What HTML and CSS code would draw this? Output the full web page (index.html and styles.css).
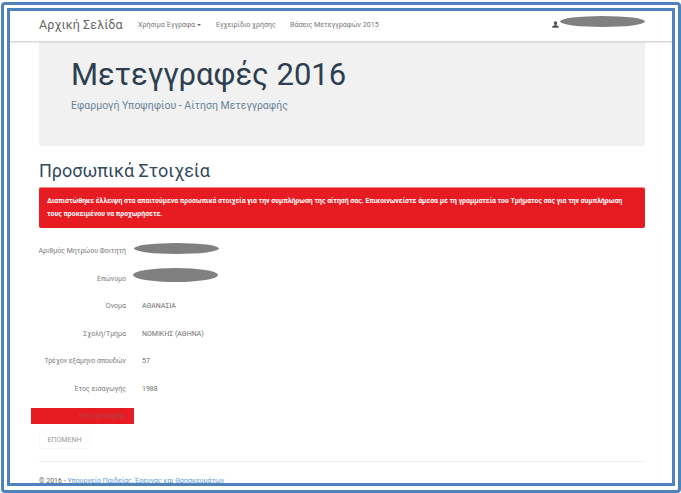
FILE: index.html
```html
<!DOCTYPE html>
<html lang="el">
<head>
<meta charset="utf-8">
<title>Μετεγγραφές 2016</title>
<link rel="stylesheet" href="styles.css">
</head>
<body>
<div class="outer">
  <div class="inner">
    <nav class="navbar">
      <a class="brand">Αρχική Σελίδα</a>
      <a class="nav-link first">Χρήσιμα Έγγραφα<span class="caret"></span></a>
      <a class="nav-link second">Εγχειρίδιο χρήσης</a>
      <a class="nav-link third">Βάσεις Μετεγγραφών 2015</a>
      <span class="user">
        <svg class="user-icon" viewBox="0 0 12 12"><path d="M6 0.5c-1.8 0-2.8 1.3-2.8 3 0 1.2.5 2.2 1.2 2.8v1L0.5 8.8v2.7h11V8.8L7.600 7.300v-1c.7-.6 1.200-1.600 1.200-2.800 0-1.700-1-3-2.800-3z"/></svg>
        <span class="redact redact-user"></span>
      </span>
    </nav>
    <main class="page">
      <header class="jumbo">
        <h1>Μετεγγραφές 2016</h1>
        <p>Εφαρμογή Υποψηφίου - Αίτηση Μετεγγραφής</p>
      </header>
      <h2>Προσωπικά Στοιχεία</h2>
      <div class="alert">Διαπιστώθηκε έλλειψη στα απαιτούμενα προσωπικά στοιχεία για την συμπλήρωση της αίτησή σας. Επικοινωνείστε άμεσα με τη γραμματεία του Τμήματος σας για την συμπλήρωση τους προκειμένου να προχωρήσετε.</div>
      <dl class="form">
        <div class="row"><dt>Αριθμός Μητρώου Φοιτητή</dt><dd></dd><span class="redact redact-a"></span></div>
        <div class="row"><dt>Επώνυμο</dt><dd></dd><span class="redact redact-b"></span></div>
        <div class="row"><dt>Όνομα</dt><dd>ΑΘΑΝΑΣΙΑ</dd></div>
        <div class="row"><dt>Σχολή/Τμήμα</dt><dd>ΝΟΜΙΚΗΣ (ΑΘΗΝΑ)</dd></div>
        <div class="row"><dt>Τρέχον εξάμηνο σπουδών</dt><dd>57</dd></div>
        <div class="row"><dt>Έτος εισαγωγής</dt><dd>1988</dd></div>
        <div class="row"><span class="flag"></span><dt class="on-flag">Έτος γέννησης</dt><dd></dd></div>
      </dl>
      <button class="next" type="button">ΕΠΟΜΕΝΗ</button>
      <hr>
      <footer>© 2016 - <a>Υπουργείο Παιδείας, Έρευνας και Θρησκευμάτων</a></footer>
    </main>
  </div>
</div>
</body>
</html>
```
FILE: styles.css
```css
* { box-sizing: border-box; }
html, body { margin: 0; height: 100%; background: #fff; }
body { font-family: Roboto, "Noto Sans", sans-serif; overflow: hidden; }
.outer {
  width: 680px; height: 491px; margin: 2px 0 0 1px;
  border: 3px solid #4f81bd; border-radius: 4px;
  padding: 3px 3px 4px 3px;
}
.inner {
  height: 100%; border: 3px solid #4f81bd; overflow: hidden;
  display: flex; flex-direction: column;
}
.navbar {
  flex: none; height: 31px; display: flex; align-items: center;
  padding: 0 27px 4px 29px; border-bottom: 1px solid #d8d8d8;
  color: #666; position: relative; z-index: 2; background: #fff;
  box-shadow: 0 1px 1px rgba(0,0,0,.08);
}
.brand { font-size: 12.5px; letter-spacing: .1px; color: #666; width: 99px; }
.nav-link { font-size: 7.1px; color: #777; }
.first { width: 78px; }
.second { width: 74px; }
.caret {
  display: inline-block; margin-left: 2px; vertical-align: middle;
  border-top: 2px solid #666; border-left: 2px solid transparent; border-right: 2px solid transparent;
}
.user { margin-left: auto; display: flex; align-items: center; position: relative; width: 93px; height: 12px; }
.user-icon { width: 7px; height: 7px; fill: #555; }
.redact { position: absolute; background: #808080; border-radius: 50%; }
.redact-user { left: 8px; top: -2px; width: 85px; height: 11px; }
.page { flex: 1; min-height: 0; padding: 0 27px 0 29px; }
.jumbo { height: 104px; background: #f1f1f1; border-radius: 0 0 2px 2px; padding: 12px 32px 0; }
h1 { margin: 0; font-size: 31px; font-weight: 400; line-height: 42px; color: #2c3e50; }
.jumbo p { margin: 3px 0 0; font-size: 10.5px; line-height: 14px; color: #6b8394; }
h2 { margin: 13px 0 0; font-size: 18px; font-weight: 400; line-height: 24px; color: #34495e; }
.alert {
  margin-top: 4px; height: 41px; padding: 7px 8px 0; background: #e71c23;
  border-top: 1px solid #f08a8c; border-radius: 2px;
  color: #fff; font-size: 6.9px; font-weight: 700; line-height: 13px;
}
.form { margin: 9.5px 0 0; }
.row { display: flex; height: 27.5px; align-items: center; position: relative; }
dt { width: 87px; text-align: right; font-size: 7px; font-weight: 400; color: #7b7b7b; white-space: nowrap; display: flex; justify-content: flex-end; position: relative; }
dd { margin: 0 0 0 16px; font-size: 7px; color: #6f6f6f; }
.on-flag { color: #a5484c; }
.flag { position: absolute; left: -8px; top: 5px; width: 103px; height: 16px; background: #e71c23; }
.redact-a { left: 95px; top: 5px; width: 85px; height: 11px; }
.redact-b { left: 94px; top: 3px; width: 85px; height: 14px; }
.next {
  display: block; margin: 0; width: 51px; height: 19px; padding: 0;
  background: #fff; border: 1px solid #fafafa; border-radius: 2px;
  font: 7px Roboto, sans-serif; color: #999;
}
hr { margin: 12px 0 0; border: 0; border-top: 1px solid #eee; }
footer { margin-top: 14px; font-size: 7px; line-height: 10px; color: #666; }
footer a { color: #5b9bd5; }
```
